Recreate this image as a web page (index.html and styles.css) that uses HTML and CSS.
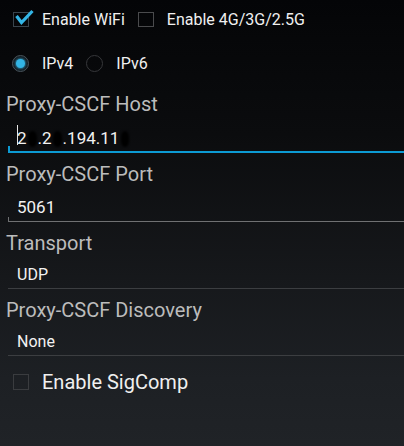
FILE: index.html
```html
<!DOCTYPE html>
<html>
<head>
<meta charset="utf-8">
<link rel="stylesheet" href="styles.css">
</head>
<body>
<div class="screen">
  <div class="row checks">
    <label class="opt">
      <span class="box checked">
        <svg width="22" height="18" viewBox="0 0 22 18"><path d="M3.5 7 L8.5 13.5 L19.5 2" fill="none" stroke="#33b5e5" stroke-width="3.2" stroke-linecap="butt" stroke-linejoin="miter"/></svg>
      </span>
      <span class="opt-text">Enable WiFi</span>
    </label>
    <label class="opt">
      <span class="box"></span>
      <span class="opt-text">Enable 4G/3G/2.5G</span>
    </label>
  </div>
  <div class="row radios">
    <label class="opt">
      <span class="radio on"><span class="dot"></span></span>
      <span class="opt-text">IPv4</span>
    </label>
    <label class="opt">
      <span class="radio"></span>
      <span class="opt-text">IPv6</span>
    </label>
  </div>

  <div class="field host">
    <div class="label">Proxy-CSCF Host</div>
    <div class="input focused">
      <span class="caret"></span><span class="val">2<span class="blot"></span>.2<span class="blot"></span>.194.11<span class="blot end"></span></span>
    </div>
  </div>
  <div class="field">
    <div class="label">Proxy-CSCF Port</div>
    <div class="input edit"><span class="val">5061</span></div>
  </div>
  <div class="field">
    <div class="label">Transport</div>
    <div class="input spin"><span class="val">UDP</span></div>
  </div>
  <div class="field">
    <div class="label">Proxy-CSCF Discovery</div>
    <div class="input spin"><span class="val">None</span></div>
  </div>

  <label class="opt big">
    <span class="box"></span>
    <span class="opt-text">Enable SigComp</span>
  </label>
</div>
</body>
</html>
```
FILE: styles.css
```css
html, body {
  margin: 0;
  padding: 0;
}
body {
  width: 404px;
  height: 446px;
  overflow: hidden;
  background: linear-gradient(to bottom, #040507 0%, #0b0c0e 30%, #16181b 62%, #1d2024 85%, #202327 100%);
  font-family: Roboto, "Noto Sans", sans-serif;
  color: #f2f2f2;
}
.screen {
  display: flex;
  flex-direction: column;
}
.row {
  display: flex;
  align-items: center;
}
.checks {
  height: 39px;
  gap: 13px;
}
.radios {
  height: 26px;
  margin-top: 11px;
  gap: 13px;
}
.opt {
  display: flex;
  align-items: center;
  padding-left: 13px;
}
.checks .opt + .opt, .radios .opt + .opt { padding-left: 0; }
.box {
  width: 16px;
  height: 15px;
  border: 1px solid #4a4b4d;
  box-sizing: border-box;
  position: relative;
  margin-right: 13px;
  flex: none;
}
.box.checked {
  border-color: #39444c;
}
.box svg {
  position: absolute;
  left: -1px;
  top: -4px;
}
.opt-text {
  font-size: 16px;
  color: #f0f0f0;
}
.radio {
  width: 17px;
  height: 17px;
  border-radius: 50%;
  border: 1px solid #36373a;
  box-sizing: border-box;
  margin-right: 13px;
  position: relative;
  flex: none;
}
.radio.on {
  border-color: #48535b;
  background: #141c21;
  margin-left: -1px;
}
.radio .dot {
  position: absolute;
  left: 3px;
  top: 3px;
  width: 9px;
  height: 9px;
  border-radius: 50%;
  background: #33b5e5;
  box-shadow: 0 0 2px 1px rgba(51, 181, 229, 0.55);
}
.field {
  display: flex;
  flex-direction: column;
  margin-top: 9px;
}
.field.host { margin-top: 16px; }
.label {
  font-size: 20px;
  color: #bcbcbc;
  padding-left: 6px;
  height: 24px;
  line-height: 24px;
}
.input {
  margin-left: 8px;
  position: relative;
  padding: 10px 0 3px 9px;
  height: 20px;
  line-height: 20px;
  font-size: 16px;
  border-bottom: 1px solid #3c3e41;
}
.input::before {
  content: "";
  position: absolute;
  left: 0;
  bottom: 0;
  width: 1px;
  height: 4px;
  background: #6f7072;
}
.input.edit {
  font-size: 17px;
  padding-top: 11px;
  padding-bottom: 4px;
  border-bottom-color: #6f7072;
}
.input.focused {
  font-size: 17px;
  padding-top: 12px;
  padding-bottom: 3px;
  border-bottom: 2px solid #0c9ad3;
}
.input.focused::before {
  background: #0c9ad3;
  width: 2px;
  height: 5px;
}
.input.spin::before { display: none; }
.val {
  color: #f2f2f2;
  white-space: nowrap;
}
.caret {
  width: 1px;
  height: 20px;
  background: #e6e6e6;
  position: absolute;
  left: 9px;
  top: 9px;
}
.blot {
  display: inline-block;
  vertical-align: -3px;
  width: 9px;
  height: 16px;
  margin: 0 1px;
  background: #000;
  border-radius: 45%;
  filter: blur(1.2px);
}
.blot.end { width: 8px; margin-left: 2px; }
.opt.big {
  margin-top: 11px;
  height: 30px;
}
.opt.big .opt-text { font-size: 20px; }
.opt.big .box { border-color: #3a3c3f; width: 16px; height: 16px; margin-right: 13px; }
```
